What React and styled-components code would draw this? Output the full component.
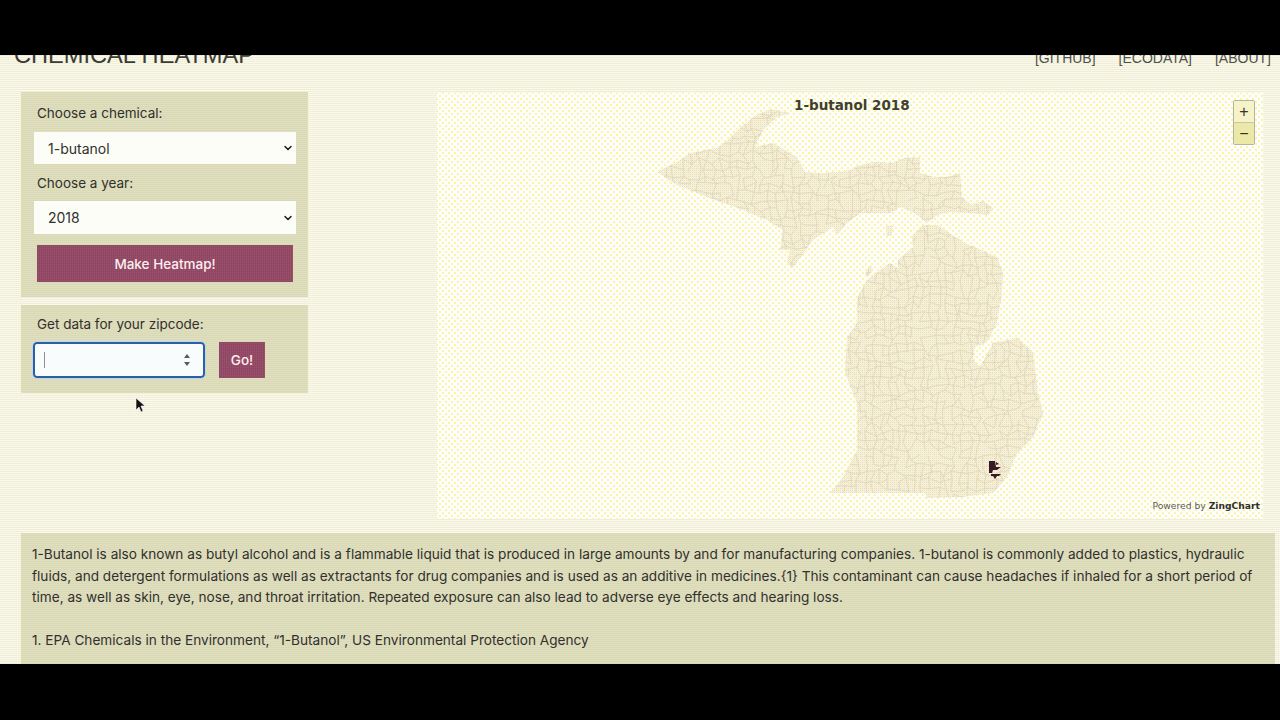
import React from "react";
import styled, { createGlobalStyle, css } from "styled-components";
import { ChevronDown } from "lucide-react";

const Global = createGlobalStyle`
  html, body { margin: 0; padding: 0; background: #000; overflow: hidden; }
  body { font-family: Inter, "Liberation Sans", sans-serif; }
`;

// the reference is a dithered gif, two 1px stripe layers give the same grain
const dither = (base, a, b) => css`
  background-color: ${base};
  background-image: linear-gradient(90deg, ${a} 50%, transparent 50%),
    linear-gradient(${b} 50%, transparent 50%);
  background-size: 2px 2px;
`;

const panelGrain = dither("#e0dfc6", "rgba(225,225,160,.5)", "rgba(205,205,190,.5)");

const Frame = styled.div`
  width: 1280px;
  height: 720px;
  display: flex;
  flex-direction: column;
  background: #000;
`;

const Letterbox = styled.div`
  flex: 0 0 ${({ $h }) => $h}px;
  background: #000;
`;

const Screen = styled.div`
  position: relative;
  flex: 0 0 609px;
  overflow: hidden;
  ${dither("#fcfcf2", "rgba(245,242,190,.4)", "rgba(215,215,205,.4)")}
`;

const Scrolled = styled.div`
  margin-top: -13px;
`;

const Header = styled.header`
  height: 50px;
  padding: 0 9px 0 14px;
  display: flex;
  justify-content: space-between;
  align-items: flex-start;
`;

const Title = styled.h1`
  margin: 0;
  font: 400 23.6px/26px "Liberation Sans", sans-serif;
  color: #3c3c34;
`;

const Nav = styled.nav`
  display: flex;
  gap: 23px;
  margin-top: 8px;
`;

const NavLink = styled.a`
  font: 400 14px/17px "Liberation Sans", sans-serif;
  color: #50504c;
`;

const Main = styled.div`
  display: flex;
  align-items: flex-start;
`;

const Sidebar = styled.aside`
  width: 287px;
  margin-left: 21px;
  display: flex;
  flex-direction: column;
  gap: 8px;
`;

const Panel = styled.div`
  display: flex;
  flex-direction: column;
  padding: ${({ $top }) => $top}px 12px 15px 13px;
  ${panelGrain}
`;

const Label = styled.label`
  margin: ${({ $mt }) => $mt || 0}px 0 0 3px;
  font-size: 13.5px;
  line-height: 17px;
  color: #30302c;
`;

const SelectWrap = styled.div`
  position: relative;
  margin-top: ${({ $mt }) => $mt}px;
  height: ${({ $h }) => $h}px;
`;

const Select = styled.select`
  width: 100%;
  height: 100%;
  padding: 0 0 0 14px;
  border: 0;
  border-radius: 0;
  appearance: none;
  background: #fdfdf8;
  font: 400 14px Inter, sans-serif;
  color: #30302c;
`;

const Chevron = styled(ChevronDown)`
  position: absolute;
  right: 2px;
  top: 50%;
  margin-top: -6px;
  pointer-events: none;
  color: #1c1c1c;
`;

const Button = styled.button`
  display: block;
  border: 0;
  padding: 0;
  ${dither("#9c5068", "rgba(130,65,105,.5)", "rgba(140,70,90,.4)")}
  color: #fdeef0;
  font: 500 13.5px Inter, sans-serif;
`;

const WideButton = styled(Button)`
  width: 256px;
  height: 37px;
  margin: 11px 0 0 3px;
`;

const ZipRow = styled.div`
  display: flex;
  gap: 14px;
  margin-top: 9px;
`;

const ZipField = styled.div`
  position: relative;
  width: 172px;
  height: 36px;
  margin-left: -1px;
`;

const ZipInput = styled.input`
  box-sizing: border-box;
  width: 100%;
  height: 100%;
  padding: 0 30px 0 10px;
  border: 2px solid #2c5fa6;
  border-radius: 4px;
  outline: 1px solid #bcd6ee;
  background: #f9fcfd;
`;

const Caret = styled.span`
  position: absolute;
  left: 11px;
  top: 10px;
  width: 1px;
  height: 16px;
  background: #8f8f90;
`;

const Spinner = styled.svg`
  position: absolute;
  right: 14px;
  top: 10px;
`;

const GoButton = styled(Button)`
  width: 46px;
  height: 36px;
`;

const MapBox = styled.div`
  position: relative;
  width: 826px;
  height: 426px;
  margin: 1px 0 0 129px;
  background-color: #fdfdfc;
  background-image: radial-gradient(#faf4a4 0.8px, transparent 0.9px),
    radial-gradient(#faf4a4 0.8px, transparent 0.9px);
  background-size: 6px 6px;
  background-position: 0 0, 3px 3px;
`;

const MapSvg = styled.svg`
  display: block;
`;

const MapTitle = styled.div`
  position: absolute;
  top: 4px;
  left: 357px;
  font: 700 13.5px/17px "DejaVu Sans", sans-serif;
  color: #40402c;
`;

const Zoom = styled.div`
  position: absolute;
  top: 7px;
  right: 8px;
  width: 20px;
  display: flex;
  flex-direction: column;
  border: 1px solid #b4b4a0;
  border-radius: 2px;
`;

const ZoomButton = styled.div`
  height: 21px;
  text-align: center;
  font: 400 16px/21px "Liberation Sans", sans-serif;
  color: #33332a;
  background: ${({ $dim }) => ($dim ? "#ece8a8" : "#f6f3c8")};
  border-top: ${({ $dim }) => ($dim ? "1px solid #c8c8a8" : "0")};
`;

const Credit = styled.div`
  position: absolute;
  right: 3px;
  bottom: 7px;
  font: 400 9.2px/12px "DejaVu Sans", sans-serif;
  color: #5c5c58;

  b {
    color: #30302c;
  }
`;

const Description = styled.section`
  margin: 14px 5px 0 21px;
  padding: 11px 11px 20px;
  font-size: 13.64px;
  line-height: 21.5px;
  color: #30302c;
  ${panelGrain}

  p {
    margin: 0 0 21.5px;
  }
`;

const Cursor = styled.svg`
  position: absolute;
  left: 135px;
  top: 342px;
`;

const UPPER = "657,172 677,162 690,153 717,148 728,140 740,128 753,117 770,109 790,113 777,117 763,130 755,147 773,143 790,153 797,157 805,172 820,173 837,172 850,170 860,165 875,162 893,163 905,158 920,157 920,173 933,177 947,177 960,173 962,197 972,205 983,201 993,208 987,215 970,213 950,212 937,215 927,223 913,212 900,207 890,213 860,213 847,223 837,235 833,227 813,240 793,268 787,263 790,250 780,250 783,230 767,220 743,210 707,197 677,185";
const LOWER = "923,225 937,225 963,242 997,257 1003,273 1002,293 997,323 987,342 975,347 973,360 980,367 993,343 1017,338 1033,352 1038,393 1043,413 1033,437 1017,453 1007,477 993,493 960,497 927,498 925,493 830,493 843,477 857,450 857,403 845,373 847,337 857,323 857,298 867,280 890,263 898,268 898,260 913,247 912,237";
const ISLANDS = ["865,273 871,265 873,270 868,277", "886,226 893,225 892,235 887,236"];

// jittered grid standing in for the zipcode borders
const noise = (a, b) => {
  const n = Math.sin(a * 12.9898 + b * 78.233) * 43758.5453;
  return n - Math.floor(n);
};
const jx = (x, y) => x + (noise(x, y) - 0.5) * 7;
const jy = (x, y) => y + (noise(y, x) - 0.5) * 7;
const zipLines = () => {
  const segs = [];
  for (let x = 650; x < 1050; x += 8) {
    for (let y = 105; y < 500; y += 8) {
      if (noise(x + 1, y) > 0.2) segs.push(`M${jx(x, y)} ${jy(x, y)}L${jx(x + 8, y)} ${jy(x + 8, y)}`);
      if (noise(x, y + 1) > 0.2) segs.push(`M${jx(x, y)} ${jy(x, y)}L${jx(x, y + 8)} ${jy(x, y + 8)}`);
    }
  }
  return segs.join("");
};

const MichiganMap = () => (
  <MapSvg width="826" height="426" viewBox="437 93 826 426">
    <defs>
      <pattern id="dither" width="4" height="4" patternUnits="userSpaceOnUse" shapeRendering="crispEdges">
        <rect width="4" height="4" fill="#f8f3dc" />
        <rect x="0" y="0" width="1" height="1" fill="#dcd8e0" />
        <rect x="2" y="0" width="1" height="1" fill="#e8e0cc" />
        <rect x="1" y="1" width="1" height="1" fill="#fcf2b0" />
        <rect x="3" y="1" width="1" height="1" fill="#f6e6cc" />
        <rect x="0" y="2" width="1" height="1" fill="#e6dfcc" />
        <rect x="2" y="2" width="1" height="1" fill="#dcd8e0" />
        <rect x="1" y="3" width="1" height="1" fill="#fbf0a8" />
        <rect x="3" y="3" width="1" height="1" fill="#fcf2b8" />
      </pattern>
      <clipPath id="state">
        <polygon points={UPPER} />
        <polygon points={LOWER} />
        {ISLANDS.map((p) => <polygon key={p} points={p} />)}
      </clipPath>
    </defs>
    <g fill="url(#dither)">
      <polygon points={UPPER} />
      <polygon points={LOWER} />
      {ISLANDS.map((p) => <polygon key={p} points={p} />)}
    </g>
    <path d={zipLines()} clipPath="url(#state)" fill="none" stroke="#d8ccae" strokeWidth="0.7" opacity="0.8" />
    <g fill="#3a1a22">
      <path d="M989 461h6l1 6h5l-4 3h-4l-1 3h-3z" />
      <path d="M991 474h10l-2 2h-2l-2 3-2-3h-2z" />
      <path d="M996 462l3 2-3 1z" />
    </g>
  </MapSvg>
);

export default function App() {
  return (
    <Frame>
      <Global />
      <Letterbox $h={55} />
      <Screen>
        <Scrolled>
          <Header>
            <Title>CHEMICAL HEATMAP</Title>
            <Nav>
              <NavLink>[GITHUB]</NavLink>
              <NavLink>[ECODATA]</NavLink>
              <NavLink>[ABOUT]</NavLink>
            </Nav>
          </Header>
          <Main>
            <Sidebar>
              <Panel $top={13}>
                <Label>Choose a chemical:</Label>
                <SelectWrap $h={32} $mt={10}>
                  <Select defaultValue="1-butanol">
                    <option>1-butanol</option>
                  </Select>
                  <Chevron size={12} strokeWidth={3} />
                </SelectWrap>
                <Label $mt={11}>Choose a year:</Label>
                <SelectWrap $h={33} $mt={9}>
                  <Select defaultValue="2018">
                    <option>2018</option>
                  </Select>
                  <Chevron size={12} strokeWidth={3} />
                </SelectWrap>
                <WideButton>Make Heatmap!</WideButton>
              </Panel>
              <Panel $top={11}>
                <Label>Get data for your zipcode:</Label>
                <ZipRow>
                  <ZipField>
                    <ZipInput type="text" />
                    <Caret />
                    <Spinner width="8" height="16" viewBox="0 0 8 16">
                      <path d="M4 2l3 4H1zM4 14l3-4H1z" fill="#5a5a5a" />
                    </Spinner>
                  </ZipField>
                  <GoButton>Go!</GoButton>
                </ZipRow>
              </Panel>
            </Sidebar>
            <MapBox>
              <MichiganMap />
              <MapTitle>1-butanol 2018</MapTitle>
              <Zoom>
                <ZoomButton>+</ZoomButton>
                <ZoomButton $dim>−</ZoomButton>
              </Zoom>
              <Credit>Powered by <b>ZingChart</b></Credit>
            </MapBox>
          </Main>
          <Description>
            <p>
              1-Butanol is also known as butyl alcohol and is a flammable liquid that is produced in large amounts by and for manufacturing companies. 1-butanol is commonly added to plastics, hydraulic fluids, and detergent formulations as well as extractants for drug companies and is used as an additive in medicines.{"{1}"} This contaminant can cause headaches if inhaled for a short period of time, as well as skin, eye, nose, and throat irritation. Repeated exposure can also lead to adverse eye effects and hearing loss.
            </p>
            <p>1. EPA Chemicals in the Environment, “1-Butanol”, US Environmental Protection Agency</p>
          </Description>
        </Scrolled>
        <Cursor width="11" height="16" viewBox="0 0 11 16">
          <path d="M1 1v12l3-3 2 5 2-1-2-5h4z" fill="#111" stroke="#fff" strokeWidth="0.6" />
        </Cursor>
      </Screen>
      <Letterbox $h={56} />
    </Frame>
  );
}
